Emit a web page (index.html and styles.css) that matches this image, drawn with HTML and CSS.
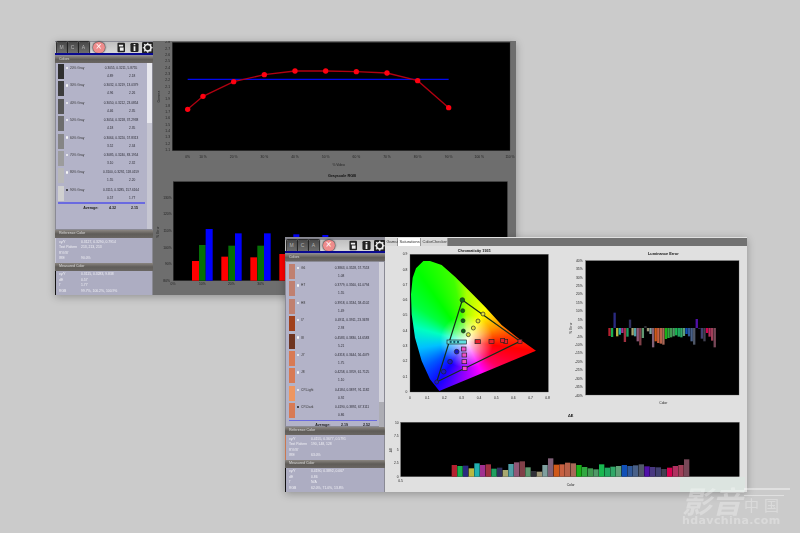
FILE: index.html
```html
<!DOCTYPE html>
<html lang="en">
<head>
<meta charset="utf-8">
<title>Calibration report</title>
<link rel="stylesheet" href="styles.css">
</head>
<body>
<div class="win win-a">
  <aside class="side">
    <div class="toolbar">
      <span class="tb">M</span><span class="tb">C</span><span class="tb">A</span><span class="tb-x">×</span>
      <svg class="ic ic-doc" viewBox="0 0 9 11"><rect x=".5" y=".5" width="8" height="10" rx="1" fill="#222"/><path d="M2 2.5h4.5v2H2zM3 5.5h4v3.5H3z" fill="#eee"/></svg>
      <svg class="ic ic-info" viewBox="0 0 10 11"><rect x=".5" y=".5" width="9" height="10" rx="1.5" fill="#222"/><path d="M4 1.5h2v1.6H4zM4 4h2v5.5H4z" fill="#eee"/></svg>
      <svg class="ic ic-gear" viewBox="0 0 12 12"><rect width="12" height="12" rx="1.5" fill="#222"/><circle cx="6" cy="6" r="3.4" fill="none" stroke="#eee" stroke-width="1.6"/><path d="M6 .8v2M6 9.2v2M.8 6h2M9.2 6h2M2.3 2.3l1.4 1.4M8.3 8.3l1.4 1.4M2.3 9.7l1.4-1.4M8.3 3.7l1.4-1.4" stroke="#eee" stroke-width="1.3"/></svg>
    </div>
    <div class="blue-line"></div>
    <div class="hdr hdr-top">Colors</div>
    <div class="list">
      <div class="rows">
        <div class="row"><i class="sw g20"></i><b class="dot"></b><span class="nm">20% Gray</span><div class="vals"><span>0.3055, 0.3211, 5.8755</span><div class="pair"><span>4.89</span><span>2.18</span></div></div></div>
        <div class="row"><i class="sw g30"></i><b class="dot"></b><span class="nm">30% Gray</span><div class="vals"><span>0.3032, 0.3219, 13.0379</span><div class="pair"><span>4.96</span><span>2.26</span></div></div></div>
        <div class="row"><i class="sw g40"></i><b class="dot"></b><span class="nm">40% Gray</span><div class="vals"><span>0.3050, 0.3212, 23.0854</span><div class="pair"><span>4.46</span><span>2.35</span></div></div></div>
        <div class="row"><i class="sw g50"></i><b class="dot"></b><span class="nm">50% Gray</span><div class="vals"><span>0.3054, 0.3218, 37.2938</span><div class="pair"><span>4.18</span><span>2.35</span></div></div></div>
        <div class="row"><i class="sw g60"></i><b class="dot"></b><span class="nm">60% Gray</span><div class="vals"><span>0.3064, 0.3220, 57.8313</span><div class="pair"><span>3.52</span><span>2.34</span></div></div></div>
        <div class="row"><i class="sw g70"></i><b class="dot"></b><span class="nm">70% Gray</span><div class="vals"><span>0.3085, 0.3240, 83.1954</span><div class="pair"><span>3.10</span><span>2.32</span></div></div></div>
        <div class="row"><i class="sw g80"></i><b class="dot"></b><span class="nm">80% Gray</span><div class="vals"><span>0.3100, 0.3292, 118.0159</span><div class="pair"><span>1.55</span><span>2.20</span></div></div></div>
        <div class="row"><i class="sw g90"></i><b class="dot on"></b><span class="nm">90% Gray</span><div class="vals"><span>0.3115, 0.3285, 157.6164</span><div class="pair"><span>0.57</span><span>1.77</span></div></div></div>
        <div class="avg-line"></div>
        <div class="avg"><span class="avg-l">Average:</span><div class="pair"><span>4.32</span><span>2.15</span></div></div>
      </div>
      <div class="scroll"><span class="thumb thumb-a"></span></div>
    </div>
    <div class="hdr">Reference Color</div>
    <div class="info bar-light">
      <div><span>xy/Y</span><span>0.3127, 0.3290, 0.7914</span></div>
      <div><span>Test Pattern</span><span>213, 213, 213</span></div>
      <div><span>R'G'B'</span><span></span></div>
      <div><span>IRE</span><span>90.0%</span></div>
    </div>
    <div class="hdr">Measured Color</div>
    <div class="info bar-dark">
      <div><span>xy/Y</span><span>0.3115, 0.3283, 9.838</span></div>
      <div><span>dE</span><span>0.57</span></div>
      <div><span>Γ</span><span>1.77</span></div>
      <div><span>RGB</span><span>99.7%, 100.2%, 100.9%</span></div>
    </div>
  </aside>
  <main class="main-a">
    <svg class="plot-a" viewBox="-24 18 1092 762">
      <rect x="37" y="22" width="1013" height="325" fill="#000" stroke="#333"/>
      <rect x="40" y="440" width="1002" height="297" fill="#000" stroke="#333"/>
      <g class="lab end">
        <text x="30" y="25">2.8</text><text x="30" y="44">2.7</text><text x="30" y="63">2.6</text><text x="30" y="82">2.5</text><text x="30" y="101">2.4</text><text x="30" y="120">2.3</text><text x="30" y="139">2.2</text><text x="30" y="158">2.1</text><text x="30" y="177">2</text><text x="30" y="196">1.9</text><text x="30" y="215">1.8</text><text x="30" y="234">1.7</text><text x="30" y="253">1.6</text><text x="30" y="272">1.5</text><text x="30" y="291">1.4</text><text x="30" y="310">1.3</text><text x="30" y="329">1.2</text><text x="30" y="348">1.1</text>
      </g>
      <text class="lab mid" transform="translate(0 185) rotate(-90)">Gamma</text>
      <g class="lab mid">
        <text x="83" y="369">0%</text><text x="129" y="369">10 %</text><text x="221" y="369">20 %</text><text x="313" y="369">30 %</text><text x="405" y="369">40 %</text><text x="497" y="369">50 %</text><text x="589" y="369">60 %</text><text x="681" y="369">70 %</text><text x="773" y="369">80 %</text><text x="866" y="369">90 %</text><text x="958" y="369">100 %</text><text x="1050" y="369">110 %</text>
        <text x="536" y="392">% Video</text>
      </g>
      <text class="title" x="546" y="425">Grayscale RGB</text>
      <line x1="83" y1="133" x2="866" y2="133" stroke="#0008f0" stroke-width="4"/>
      <polyline points="83,223 129,184 221,140 313,119 405,108 497,108 589,110 681,114 773,137 866,218" fill="none" stroke="#b00010" stroke-width="4"/>
      <g fill="#ff0010">
        <circle cx="83" cy="223" r="8"/><circle cx="129" cy="184" r="8"/><circle cx="221" cy="140" r="8"/><circle cx="313" cy="119" r="8"/><circle cx="405" cy="108" r="8"/><circle cx="497" cy="108" r="8"/><circle cx="589" cy="110" r="8"/><circle cx="681" cy="114" r="8"/><circle cx="773" cy="137" r="8"/><circle cx="866" cy="218" r="8"/>
      </g>
      <g class="lab end">
        <text x="35" y="491">130%</text><text x="35" y="541">120%</text><text x="35" y="591">110%</text><text x="35" y="641">100%</text><text x="35" y="691">90%</text>
      </g>
      <text class="lab mid" transform="translate(-4 591) rotate(-90)">% Error</text>
      <g class="lab mid">
        <text x="39" y="751">0%</text><text x="127" y="751">10%</text><text x="214" y="751">20%</text><text x="302" y="751">30%</text><text x="20" y="741">80%</text>
      </g>
      <g fill="#ff0000"><rect x="96" y="678" width="21" height="59"/><rect x="184" y="665" width="20" height="72"/><rect x="271" y="667" width="20" height="70"/><rect x="358" y="657" width="20" height="80"/></g>
      <g fill="#057005"><rect x="117" y="630" width="20" height="107"/><rect x="205" y="632" width="20" height="105"/><rect x="292" y="632" width="20" height="105"/></g>
      <g fill="#0000ff"><rect x="137" y="582" width="21" height="155"/><rect x="225" y="595" width="20" height="142"/><rect x="312" y="595" width="20" height="142"/><rect x="400" y="598" width="18" height="139"/><rect x="487" y="600" width="18" height="137"/></g>
    </svg>
  </main>
</div>

<div class="win win-b">
  <aside class="side">
    <div class="toolbar">
      <span class="tb">M</span><span class="tb">C</span><span class="tb">A</span><span class="tb-x">×</span>
      <svg class="ic ic-doc" viewBox="0 0 9 11"><rect x=".5" y=".5" width="8" height="10" rx="1" fill="#222"/><path d="M2 2.5h4.5v2H2zM3 5.5h4v3.5H3z" fill="#eee"/></svg>
      <svg class="ic ic-info" viewBox="0 0 10 11"><rect x=".5" y=".5" width="9" height="10" rx="1.5" fill="#222"/><path d="M4 1.5h2v1.6H4zM4 4h2v5.5H4z" fill="#eee"/></svg>
      <svg class="ic ic-gear" viewBox="0 0 12 12"><rect width="12" height="12" rx="1.5" fill="#222"/><circle cx="6" cy="6" r="3.4" fill="none" stroke="#eee" stroke-width="1.6"/><path d="M6 .8v2M6 9.2v2M.8 6h2M9.2 6h2M2.3 2.3l1.4 1.4M8.3 8.3l1.4 1.4M2.3 9.7l1.4-1.4M8.3 3.7l1.4-1.4" stroke="#eee" stroke-width="1.3"/></svg>
    </div>
    <div class="blue-line"></div>
    <div class="hdr hdr-top">Colors</div>
    <div class="list">
      <div class="rows">
        <div class="row"><i class="sw c1"></i><b class="dot"></b><span class="nm">G6</span><div class="vals"><span>0.3863, 0.3528, 57.7553</span><div class="pair"><span>1.08</span><span></span></div></div></div>
        <div class="row"><i class="sw c1"></i><b class="dot"></b><span class="nm">H7</span><div class="vals"><span>0.3779, 0.3560, 61.0794</span><div class="pair"><span>1.55</span><span></span></div></div></div>
        <div class="row"><i class="sw c1"></i><b class="dot"></b><span class="nm">H8</span><div class="vals"><span>0.3918, 0.3534, 58.4102</span><div class="pair"><span>1.49</span><span></span></div></div></div>
        <div class="row"><i class="sw c2"></i><b class="dot"></b><span class="nm">I7</span><div class="vals"><span>0.4911, 0.3911, 23.3678</span><div class="pair"><span>2.93</span><span></span></div></div></div>
        <div class="row"><i class="sw c3"></i><b class="dot"></b><span class="nm">I8</span><div class="vals"><span>0.4583, 0.3830, 14.6583</span><div class="pair"><span>5.21</span><span></span></div></div></div>
        <div class="row"><i class="sw c4"></i><b class="dot"></b><span class="nm">J7</span><div class="vals"><span>0.4318, 0.3644, 56.4079</span><div class="pair"><span>1.75</span><span></span></div></div></div>
        <div class="row"><i class="sw c4"></i><b class="dot"></b><span class="nm">J8</span><div class="vals"><span>0.4258, 0.3709, 61.7125</span><div class="pair"><span>1.10</span><span></span></div></div></div>
        <div class="row"><i class="sw c5"></i><b class="dot"></b><span class="nm">CP-Light</span><div class="vals"><span>0.4184, 0.3897, 91.1182</span><div class="pair"><span>0.92</span><span></span></div></div></div>
        <div class="row"><i class="sw c4"></i><b class="dot on"></b><span class="nm">CP-Dark</span><div class="vals"><span>0.4190, 0.3892, 67.3111</span><div class="pair"><span>0.86</span><span></span></div></div></div>
        <div class="avg-line"></div>
        <div class="avg"><span class="avg-l">Average:</span><div class="pair"><span>2.19</span><span>2.52</span></div></div>
      </div>
      <div class="scroll scroll-b"><span class="thumb thumb-b"></span></div>
    </div>
    <div class="hdr">Reference Color</div>
    <div class="info bar-orange">
      <div><span>xy/Y</span><span>0.4155, 0.3677, 0.5791</span></div>
      <div><span>Test Pattern</span><span>190, 148, 128</span></div>
      <div><span>R'G'B'</span><span></span></div>
      <div><span>IRE</span><span>63.0%</span></div>
    </div>
    <div class="hdr">Measured Color</div>
    <div class="info bar-dark">
      <div><span>xy/Y</span><span>0.4190, 0.3892, 0.067</span></div>
      <div><span>dE</span><span>0.86</span></div>
      <div><span>Γ</span><span>N/A</span></div>
      <div><span>RGB</span><span>62.0%, 71.0%, 13.8%</span></div>
    </div>
  </aside>
  <main class="main-b">
    <div class="tabs"><span class="tab">Gamut</span><span class="tab tab-on">Saturations</span><span class="tab">ColorChecker</span><span class="tab-rest"></span></div>
    <div class="charts">
      <svg class="plot-cie" viewBox="0 33 525 492">
        <text class="title" x="268" y="50">Chromaticity 1931</text>
        <rect x="75" y="58" width="415" height="413" fill="#000" stroke="#555"/>
        <g class="lab end">
          <text x="67" y="61">0.9</text><text x="67" y="107">0.8</text><text x="67" y="152">0.7</text><text x="67" y="198">0.6</text><text x="67" y="244">0.5</text><text x="67" y="290">0.4</text><text x="67" y="336">0.3</text><text x="67" y="382">0.2</text><text x="67" y="428">0.1</text><text x="67" y="474">0</text>
        </g>
        <g class="lab mid">
          <text x="75" y="493">0</text><text x="127" y="493">0.1</text><text x="178" y="493">0.2</text><text x="230" y="493">0.3</text><text x="282" y="493">0.4</text><text x="334" y="493">0.5</text><text x="385" y="493">0.6</text><text x="437" y="493">0.7</text><text x="488" y="493">0.8</text>
        </g>
        <foreignObject x="75" y="58" width="415" height="413"><div class="cie"></div></foreignObject>
        <polygon points="405,319 232,195 155,441" fill="none" stroke="#123018" stroke-width="3.5"/>
        <g stroke="#222" stroke-width="2">
          <g fill="#0a6a14"><circle cx="232" cy="195" r="7"/><circle cx="233" cy="227" r="6"/><circle cx="234" cy="257" r="6"/><circle cx="235" cy="288" r="6"/></g>
          <g fill="#e0e040"><circle cx="294" cy="237" r="6"/><circle cx="279" cy="258" r="6"/><circle cx="265" cy="279" r="6"/><circle cx="250" cy="299" r="6"/></g>
          <g fill="#e8202c"><rect x="399" y="313" width="12" height="12"/><rect x="356" y="313" width="12" height="12"/><rect x="347" y="310" width="12" height="12"/><rect x="312" y="313" width="15" height="12"/><rect x="270" y="314" width="16" height="12"/></g>
          <g fill="#1a1ac0"><circle cx="155" cy="441" r="6"/><circle cx="176" cy="410" r="7"/><circle cx="195" cy="380" r="7"/><circle cx="215" cy="350" r="7"/></g>
          <g fill="#f050c8"><rect x="232" y="394" width="14" height="12"/><rect x="231" y="374" width="14" height="12"/><rect x="231" y="354" width="14" height="12"/><rect x="229" y="336" width="14" height="12"/></g>
          <g fill="#60e0e0"><rect x="186" y="315" width="58" height="12"/></g>
          <g fill="#145a6a" stroke="none"><circle cx="197" cy="321" r="3.5"/><circle cx="208" cy="321" r="3.5"/><circle cx="219" cy="321" r="3.5"/></g>
        </g>
      </svg>
      <svg class="plot-lum" viewBox="0 18 561 492">
        <text class="title" x="310" y="45">Luminance Error</text>
        <rect x="77" y="62" width="460" height="403" fill="#000" stroke="#555"/>
        <g class="lab end">
          <text x="68" y="65">40%</text><text x="68" y="90">35%</text><text x="68" y="116">30%</text><text x="68" y="141">25%</text><text x="68" y="166">20%</text><text x="68" y="192">15%</text><text x="68" y="217">10%</text><text x="68" y="242">5%</text><text x="68" y="267">0%</text><text x="68" y="293">-5%</text><text x="68" y="318">-10%</text><text x="68" y="343">-15%</text><text x="68" y="369">-20%</text><text x="68" y="394">-25%</text><text x="68" y="419">-30%</text><text x="68" y="444">-35%</text><text x="68" y="470">-40%</text>
        </g>
        <text class="lab mid" transform="translate(35 264) rotate(-90)">% Error</text>
        <text class="lab mid" x="310" y="492">Color</text>
        <g>
          <rect x="145" y="264" width="7" height="24" fill="#b5202f"/><rect x="152.7" y="264" width="7" height="27" fill="#18b050"/><rect x="160.4" y="218" width="7" height="46" fill="#2a2a80"/><rect x="168.1" y="264" width="7" height="25" fill="#b8b840"/><rect x="175.8" y="264" width="7" height="20" fill="#20b0b0"/><rect x="183.5" y="264" width="7" height="15" fill="#a03090"/><rect x="191.2" y="264" width="7" height="42" fill="#a03040"/><rect x="198.9" y="264" width="7" height="26" fill="#20a060"/><rect x="206.6" y="239" width="7" height="25" fill="#303060"/><rect x="214.3" y="264" width="7" height="22" fill="#a8a870"/><rect x="222" y="264" width="7" height="25" fill="#50a0a8"/><rect x="229.7" y="264" width="7" height="40" fill="#905878"/><rect x="237.4" y="264" width="7" height="52" fill="#804048"/><rect x="245.1" y="264" width="7" height="30" fill="#609870"/><rect x="252.8" y="258" width="7" height="6" fill="#303038"/><rect x="260.5" y="264" width="7" height="10" fill="#a09878"/><rect x="268.2" y="264" width="7" height="18" fill="#80a0a0"/><rect x="275.9" y="264" width="7" height="58" fill="#806078"/><rect x="283.6" y="264" width="7" height="40" fill="#d05818"/><rect x="291.3" y="264" width="7" height="45" fill="#c86040"/><rect x="299" y="264" width="7" height="47" fill="#b86048"/><rect x="306.7" y="264" width="7" height="50" fill="#a86858"/><rect x="314.4" y="264" width="7" height="33" fill="#18b018"/><rect x="322.1" y="264" width="7" height="30" fill="#30a840"/><rect x="329.8" y="264" width="7" height="28" fill="#409850"/><rect x="337.5" y="264" width="7" height="25" fill="#509868"/><rect x="345.2" y="264" width="7" height="22" fill="#18b850"/><rect x="352.9" y="264" width="7" height="26" fill="#20a860"/><rect x="360.6" y="264" width="7" height="28" fill="#30a868"/><rect x="368.3" y="264" width="7" height="24" fill="#60a078"/><rect x="376" y="264" width="7" height="18" fill="#1050b8"/><rect x="383.7" y="264" width="7" height="25" fill="#305898"/><rect x="391.4" y="264" width="7" height="40" fill="#486088"/><rect x="399.1" y="264" width="7" height="50" fill="#505868"/><rect x="406.8" y="237" width="7" height="27" fill="#5010a8"/><rect x="414.5" y="264" width="7" height="2" fill="#483880"/><rect x="422.2" y="264" width="7" height="32" fill="#404070"/><rect x="429.9" y="264" width="7" height="40" fill="#404050"/><rect x="437.6" y="264" width="7" height="15" fill="#d80050"/><rect x="445.3" y="264" width="7" height="26" fill="#b03060"/><rect x="453" y="264" width="7" height="38" fill="#a04058"/><rect x="460.7" y="264" width="7" height="58" fill="#784858"/>
        </g>
      </svg>
      <svg class="plot-de" viewBox="0 0 1086 246">
        <text class="title" x="557" y="22">ΔE</text>
        <rect x="47" y="37" width="1016" height="163" fill="#000" stroke="#555"/>
        <g class="lab end">
          <text x="41" y="41">10</text><text x="41" y="82">7.5</text><text x="41" y="122">5</text><text x="41" y="163">2.5</text><text x="41" y="203">0</text>
        </g>
        <text class="lab mid" transform="translate(20 120) rotate(-90)">ΔE</text>
        <text class="lab mid" x="47" y="215">0.5</text>
        <text class="lab mid" x="557" y="227">Color</text>
        <g>
          <rect x="200" y="165" width="16" height="35" fill="#b5202f"/><rect x="217" y="168" width="16" height="32" fill="#18b050"/><rect x="234" y="167" width="16" height="33" fill="#2a2a80"/><rect x="251" y="175" width="16" height="25" fill="#b8b840"/><rect x="268" y="160" width="16" height="40" fill="#20b0b0"/><rect x="285" y="165" width="16" height="35" fill="#a03090"/><rect x="302" y="163" width="16" height="37" fill="#a03040"/><rect x="319" y="176" width="16" height="24" fill="#20a060"/><rect x="336" y="173" width="16" height="27" fill="#303060"/><rect x="353" y="180" width="16" height="20" fill="#a8a870"/><rect x="370" y="162" width="16" height="38" fill="#50a0a8"/><rect x="387" y="157" width="16" height="43" fill="#905878"/><rect x="404" y="154" width="16" height="46" fill="#804048"/><rect x="421" y="172" width="16" height="28" fill="#609870"/><rect x="438" y="183" width="16" height="17" fill="#303038"/><rect x="455" y="185" width="16" height="15" fill="#a09878"/><rect x="472" y="165" width="16" height="35" fill="#80a0a0"/><rect x="489" y="145" width="16" height="55" fill="#806078"/><rect x="506" y="164" width="16" height="36" fill="#d05818"/><rect x="523" y="163" width="16" height="37" fill="#c86040"/><rect x="540" y="158" width="16" height="42" fill="#b86048"/><rect x="557" y="160" width="16" height="40" fill="#a86858"/><rect x="574" y="165" width="16" height="35" fill="#18b018"/><rect x="591" y="171" width="16" height="29" fill="#30a840"/><rect x="608" y="175" width="16" height="25" fill="#409850"/><rect x="625" y="178" width="16" height="22" fill="#509868"/><rect x="642" y="163" width="16" height="37" fill="#18b850"/><rect x="659" y="173" width="16" height="27" fill="#20a860"/><rect x="676" y="170" width="16" height="30" fill="#30a868"/><rect x="693" y="168" width="16" height="32" fill="#60a078"/><rect x="710" y="165" width="16" height="35" fill="#1050b8"/><rect x="727" y="168" width="16" height="32" fill="#305898"/><rect x="744" y="166" width="16" height="34" fill="#486088"/><rect x="761" y="163" width="16" height="37" fill="#505868"/><rect x="778" y="169" width="16" height="31" fill="#5010a8"/><rect x="795" y="171" width="16" height="29" fill="#483880"/><rect x="812" y="172" width="16" height="28" fill="#404070"/><rect x="829" y="177" width="16" height="23" fill="#404050"/><rect x="846" y="173" width="16" height="27" fill="#d80050"/><rect x="863" y="168" width="16" height="32" fill="#b03060"/><rect x="880" y="165" width="16" height="35" fill="#a04058"/><rect x="897" y="148" width="16" height="52" fill="#784858"/>
        </g>
      </svg>
    </div>
  </main>
</div>

<div class="mark">
  <div class="mark-top"><span class="mark-big">影音</span><span class="mark-side"><span class="streak"></span><span class="streak short"></span><span class="mark-small">中国</span></span></div>
  <div class="mark-url">hdavchina.com</div>
</div>
</body>
</html>
```
FILE: styles.css
```css
* { box-sizing: border-box; }
html, body { margin: 0; height: 100%; }
body {
  width: 800px; height: 533px; overflow: hidden; position: relative;
  background: #cbcbcb;
  font-family: "Liberation Sans", Arial, sans-serif;
}
.win {
  position: absolute; display: flex;
  box-shadow: 0 2px 8px rgba(0,0,0,.28);
  filter: blur(.4px);
}
.win-a { left: 55px; top: 41px; width: 461px; height: 254px; background: #6e6e6e; }
.win-b { left: 285px; top: 237px; width: 462px; height: 255px; background: #e0e0e0; }

.side { width: 98px; flex: none; display: flex; flex-direction: column; background: #8a8a94; }
.win-a .side { padding-top: 1px; }
.win-b .side { width: 100px; padding-top: 3px; }

.toolbar { height: 11px; display: flex; align-items: center; gap: 1px; padding: 0 0 0 1.5px; background: linear-gradient(#c0c0c0, #d8d8d8); flex: none; }
.tb { width: 10px; height: 10.5px; flex: none; background: linear-gradient(#484848, #6c6c6c); color: #b4b4b4; font-size: 5px; line-height: 10px; text-align: center; border-radius: 1px; box-shadow: 0 0 1px 0.5px #222; }
.tb-x { width: 11.5px; height: 11.5px; flex: none; margin-left: 3.5px; border-radius: 50%; background: #ee8c8c; box-shadow: 0 0 1.5px .5px #333; color: #fff; font-size: 10px; line-height: 10.5px; text-align: center; }
.ic { display: block; flex: none; }
.ic-doc { width: 8.5px; height: 11px; margin-left: auto; }
.ic-info { width: 9px; height: 11px; margin-left: 4px; }
.ic-gear { width: 11.5px; height: 11.5px; margin-left: 1.5px; }

.blue-line { height: 1.6px; background: #0a0a90; flex: none; margin-bottom: 1.4px; }
.hdr { height: 8px; flex: none; padding-left: 4px; font-size: 3.6px; line-height: 7.5px; color: #ddd; background: linear-gradient(#8a8580, #5f5c58 50%, #6a6663); }
.hdr-top { height: 7px; line-height: 7px; }

.list { flex: 1; min-height: 0; display: flex; margin: 1px 1px 1px 1px; background: #b3b3c8; }
.win-a .list { margin-top: 0; }
.rows { flex: 1; min-width: 0; display: flex; flex-direction: column; padding: 1px 0 0 2px; }
.win-b .rows { padding-top: 2px; padding-left: 3px; }
.row { height: 17.4px; flex: none; display: flex; color: #2a2a33; font-size: 3.2px; line-height: 8px; }
.sw { width: 5.5px; height: 15px; flex: none; }
.dot { width: 2.4px; height: 2.4px; margin: 2.8px 1.6px 0 2.6px; border-radius: 50%; background: #f6f6f6; flex: none; }
.dot.on { background: #222; }
.nm { width: 29px; flex: none; white-space: nowrap; color: #333; }
.vals { width: 44px; flex: none; display: flex; flex-direction: column; align-items: center; white-space: nowrap; }
.pair { width: 44px; display: flex; }
.pair span { flex: 1; text-align: center; }
.avg-line { height: 1.6px; background: #6a6ae0; margin: -1px 2px 0 0; flex: none; }
.avg { display: flex; justify-content: flex-end; font-size: 3.6px; font-weight: 700; line-height: 8px; color: #222; margin-top: 0; padding-right: 1px; }
.avg-l { margin-right: 3px; }
.scroll { width: 5.5px; flex: none; background: #c6c6d2; }
.thumb { display: block; width: 100%; }
.thumb-a { height: 60px; background: #e8e8ee; }
.scroll-b { background: #d4d4dc; }
.thumb-b { height: 26px; margin-top: 140px; background: #adadb4; }

.info { height: 24.5px; flex: none; margin: 0 1px 0 0; padding: 1.5px 0 0 3px; background: #adadc2; color: #f0f0f5; font-size: 3.4px; line-height: 5.6px; border-left: 1px solid transparent; }
.info div { display: flex; }
.info span:first-child { width: 22px; flex: none; }
.bar-light { border-left-color: #c8c8d4; }
.bar-orange { border-left-color: #c9784f; }
.bar-dark { border-left-color: #111; }

.g20 { background: #2e2e2e; } .g30 { background: #3d3d3d; } .g40 { background: #565656; }
.g50 { background: #6d6d6d; } .g60 { background: #858585; } .g70 { background: #9c9c9c; }
.g80 { background: #b8b8b8; } .g90 { background: #d0d0d0; }
.c1 { background: #c08070; } .c2 { background: #a0401c; } .c3 { background: #6e3420; }
.c4 { background: #d87a54; } .c5 { background: #ee9660; }

.main-a { flex: 1; min-width: 0; background: #6e6e6e; }
.plot-a { display: block; width: 364px; height: 254px; margin-left: -1px; }
.main-b { flex: 1; min-width: 0; display: flex; flex-direction: column; padding-top: 1px; }
.tabs { height: 8px; flex: none; display: flex; font-size: 4px; line-height: 8px; color: #333; }
.tab { padding: 0 1.5px; background: #d8d8d8; border-right: .5px solid #999; white-space: nowrap; width: 13px; }
.tab-on { background: #fff; width: 23px; }
.tab:nth-child(3) { width: 27px; }
.tab-rest { flex: 1; background: #727272; }
.charts { display: grid; grid-template-columns: 175px 187px; grid-template-rows: 164px 82px; flex: 1; }
.plot-cie, .plot-lum, .plot-de { display: block; width: 100%; height: 100%; }
.plot-de { grid-column: 1 / -1; }

.lab { font-family: "Liberation Sans", sans-serif; font-size: 10px; fill: #222; }
.end { text-anchor: end; }
.mid { text-anchor: middle; }
.title { font-family: "Liberation Sans", sans-serif; font-size: 11.5px; font-weight: 700; fill: #111; text-anchor: middle; }

.cie {
  width: 415px; height: 413px;
  background:
    radial-gradient(circle at 170px 261px, #fff 0, rgba(255,255,255,.75) 18px, rgba(255,255,255,0) 80px),
    conic-gradient(from 0deg at 170px 261px, #a8ff00 0deg, #ffff00 30deg, #ff9000 65deg, #ff0000 98deg, #ff0060 130deg, #ff00ff 154deg, #8000ff 190deg, #1000ff 215deg, #0058ff 238deg, #00c0ff 262deg, #00ffc0 285deg, #00ff40 305deg, #00ff00 325deg, #40ff00 348deg, #a8ff00 360deg);
  clip-path: polygon(88px 410px, 60px 375px, 35px 320px, 15px 250px, 5px 180px, 3px 120px, 8px 70px, 18px 42px, 40px 20px, 60px 20px, 95px 32px, 135px 67px, 185px 117px, 225px 157px, 275px 212px, 325px 252px, 378px 289px);
}

.mark { position: absolute; left: 682px; top: 485px; width: 108px; color: rgba(255,255,255,.3); }
.mark::before { content: ""; position: absolute; left: -2px; top: -8px; width: 65px; height: 15px; background: rgba(205,240,225,.22); }
.mark-top { display: flex; height: 31px; position: relative; }
.mark-big { font-family: "Noto Sans CJK SC", sans-serif; font-weight: 700; font-style: italic; font-size: 30px; line-height: 31px; white-space: nowrap; width: 62px; flex: none; }
.mark-side { display: flex; flex-direction: column; width: 46px; }
.streak { height: 1.5px; background: rgba(255,255,255,.4); margin-top: 3px; }
.streak.short { margin-top: 5px; width: 40px; }
.mark-small { font-family: "Noto Sans CJK SC", sans-serif; font-size: 15px; line-height: 15px; letter-spacing: 5px; margin-top: 1px; white-space: nowrap; }
.mark-url { position: relative; font-family: "DejaVu Sans", sans-serif; font-weight: 700; font-size: 11px; line-height: 9px; letter-spacing: .4px; white-space: nowrap; }
```
